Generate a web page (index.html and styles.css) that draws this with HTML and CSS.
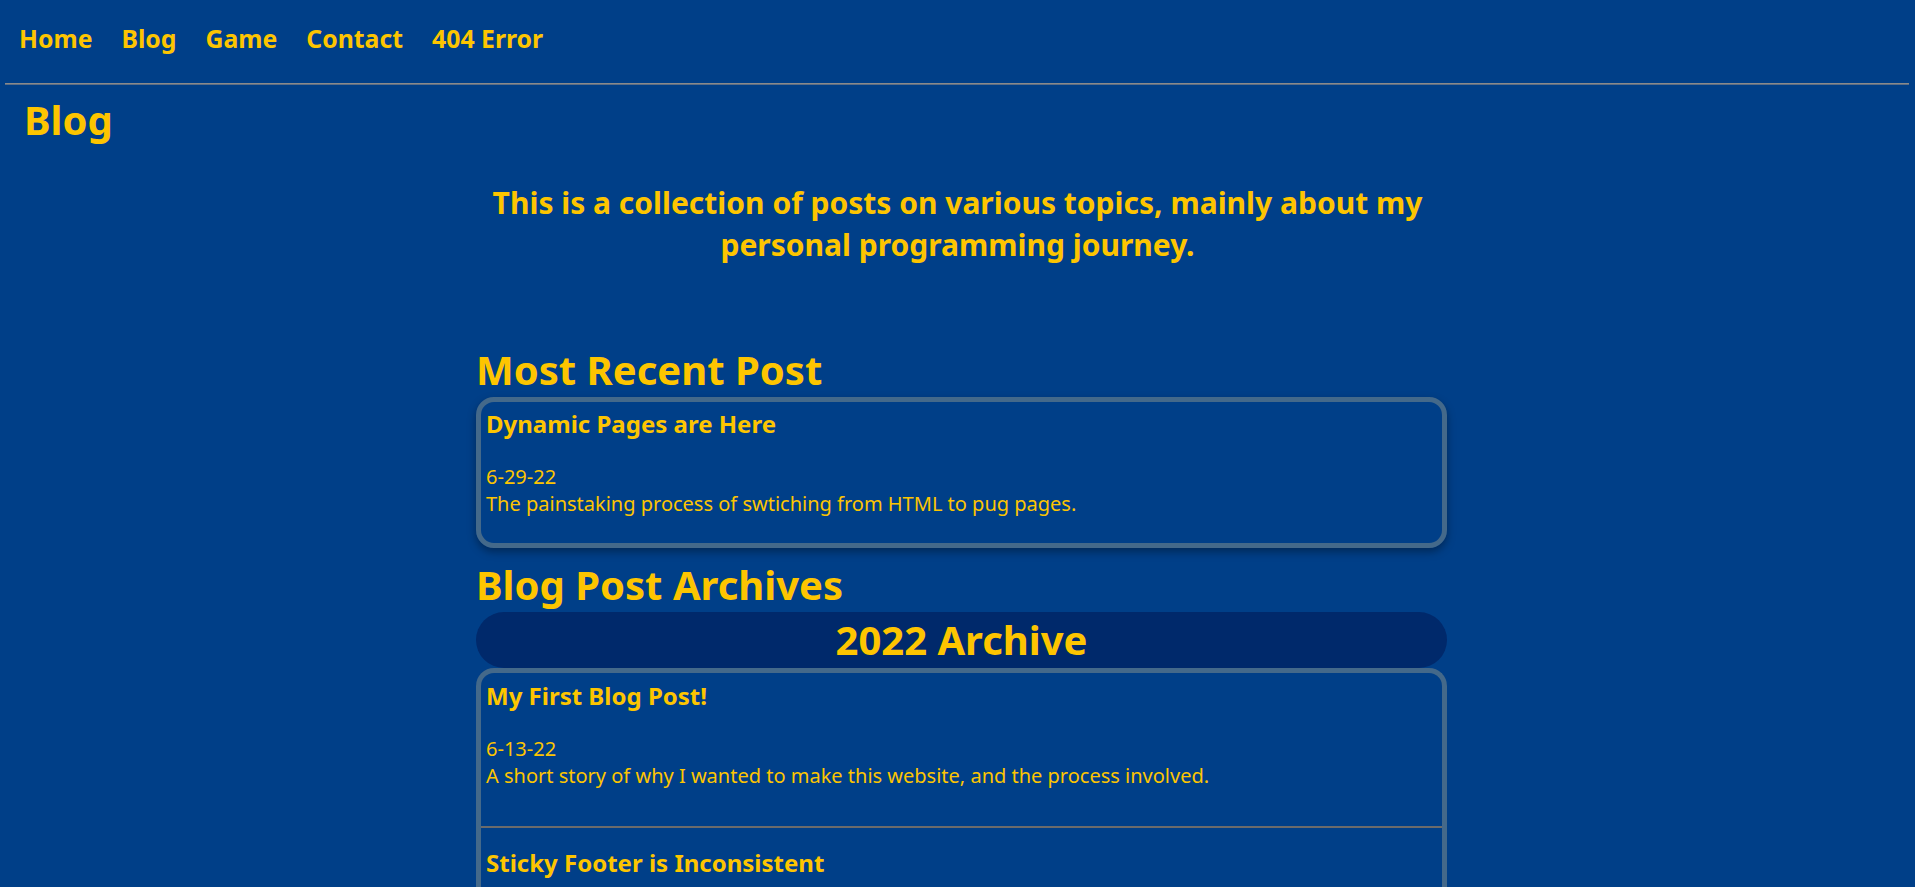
FILE: index.html
```html
<!DOCTYPE html>
<html lang="en">
<head>
<meta charset="utf-8">
<title>Blog</title>
<link rel="stylesheet" href="styles.css">
</head>
<body>
<nav class="nav">
  <a class="nav-link" href="#">Home</a>
  <a class="nav-link" href="#">Blog</a>
  <a class="nav-link" href="#">Game</a>
  <a class="nav-link" href="#">Contact</a>
  <a class="nav-link" href="#">404 Error</a>
</nav>
<div class="rule"></div>
<h1 class="page-title">Blog</h1>
<p class="intro">This is a collection of posts on various topics, mainly about my<br>personal programming journey.</p>
<main class="wrap">
  <div class="column">
    <h2 class="section-title">Most Recent Post</h2>
    <div class="card">
      <article class="post post-recent">
        <h3 class="post-title">Dynamic Pages are Here</h3>
        <p class="post-date">6-29-22</p>
        <p class="post-desc">The painstaking process of swtiching from HTML to pug pages.</p>
      </article>
    </div>
    <h2 class="section-title archives-title">Blog Post Archives</h2>
    <div class="year-pill">2022 Archive</div>
    <div class="card card-archive">
      <article class="post post-archive post-first">
        <h3 class="post-title">My First Blog Post!</h3>
        <p class="post-date">6-13-22</p>
        <p class="post-desc">A short story of why I wanted to make this website, and the process involved.</p>
      </article>
      <article class="post post-archive">
        <h3 class="post-title">Sticky Footer is Inconsistent</h3>
        <p class="post-date">6-20-22</p>
        <p class="post-desc">Why the footer keeps moving around on some pages.</p>
      </article>
    </div>
  </div>
</main>
</body>
</html>
```
FILE: styles.css
```css
html, body {
  margin: 0;
  padding: 0;
}
body {
  background: #003f88;
  color: #fdc500;
  font-family: "Noto Sans", "Open Sans", sans-serif;
  overflow: hidden;
}
.nav {
  display: flex;
  gap: 29px;
  padding: 21px 0 0 19px;
  height: 63px;
  box-sizing: border-box;
}
.nav-link {
  color: #fdc500;
  text-decoration: none;
  font-weight: 700;
  font-size: 24.8px;
  line-height: 34px;
}
.rule {
  margin: 0 6px 0 5px;
  height: 0;
  border-top: 1px solid #8a8a8a;
  border-bottom: 1px solid #5c6e86;
  margin-top: 20px;
}
.page-title {
  margin: 8px 0 0 24px;
  font-size: 40px;
  line-height: 54px;
  font-weight: 700;
}
.intro {
  margin: 35px 0 0;
  text-align: center;
  font-size: 30px;
  line-height: 42px;
  font-weight: 700;
}
.wrap {
  width: 979px;
  margin: 76px auto 0;
  padding-left: 8px;
  box-sizing: border-box;
}
.column {
  width: 971px;
}
.section-title {
  margin: 0;
  font-size: 40px;
  line-height: 55px;
  font-weight: 700;
}
.archives-title {
  margin-top: 9px;
}
.card {
  border: 5px solid #44698a;
  border-radius: 18px;
  box-shadow: 0 4px 8px rgba(0, 0, 0, 0.35);
}
.card-archive {
  border-bottom: none;
  border-radius: 18px 18px 0 0;
  box-shadow: none;
}
.year-pill {
  background: #00296b;
  border-radius: 28px;
  height: 56px;
  text-align: center;
  font-size: 40px;
  line-height: 56px;
  font-weight: 700;
}
.post-title {
  margin: 0 0 23px;
  font-size: 24px;
  line-height: 33px;
  font-weight: 700;
}
.post-date,
.post-desc {
  margin: 0;
  font-size: 20px;
  line-height: 27px;
}
.post-recent {
  padding: 5px 5px 26px;
}
.post-archive {
  padding: 18px 5px 37px;
  border-top: 2px solid #6b6b6b;
}
.post-first {
  padding-top: 6px;
  border-top: none;
}
.post-first .post-title {
  margin-bottom: 23px;
}
```
